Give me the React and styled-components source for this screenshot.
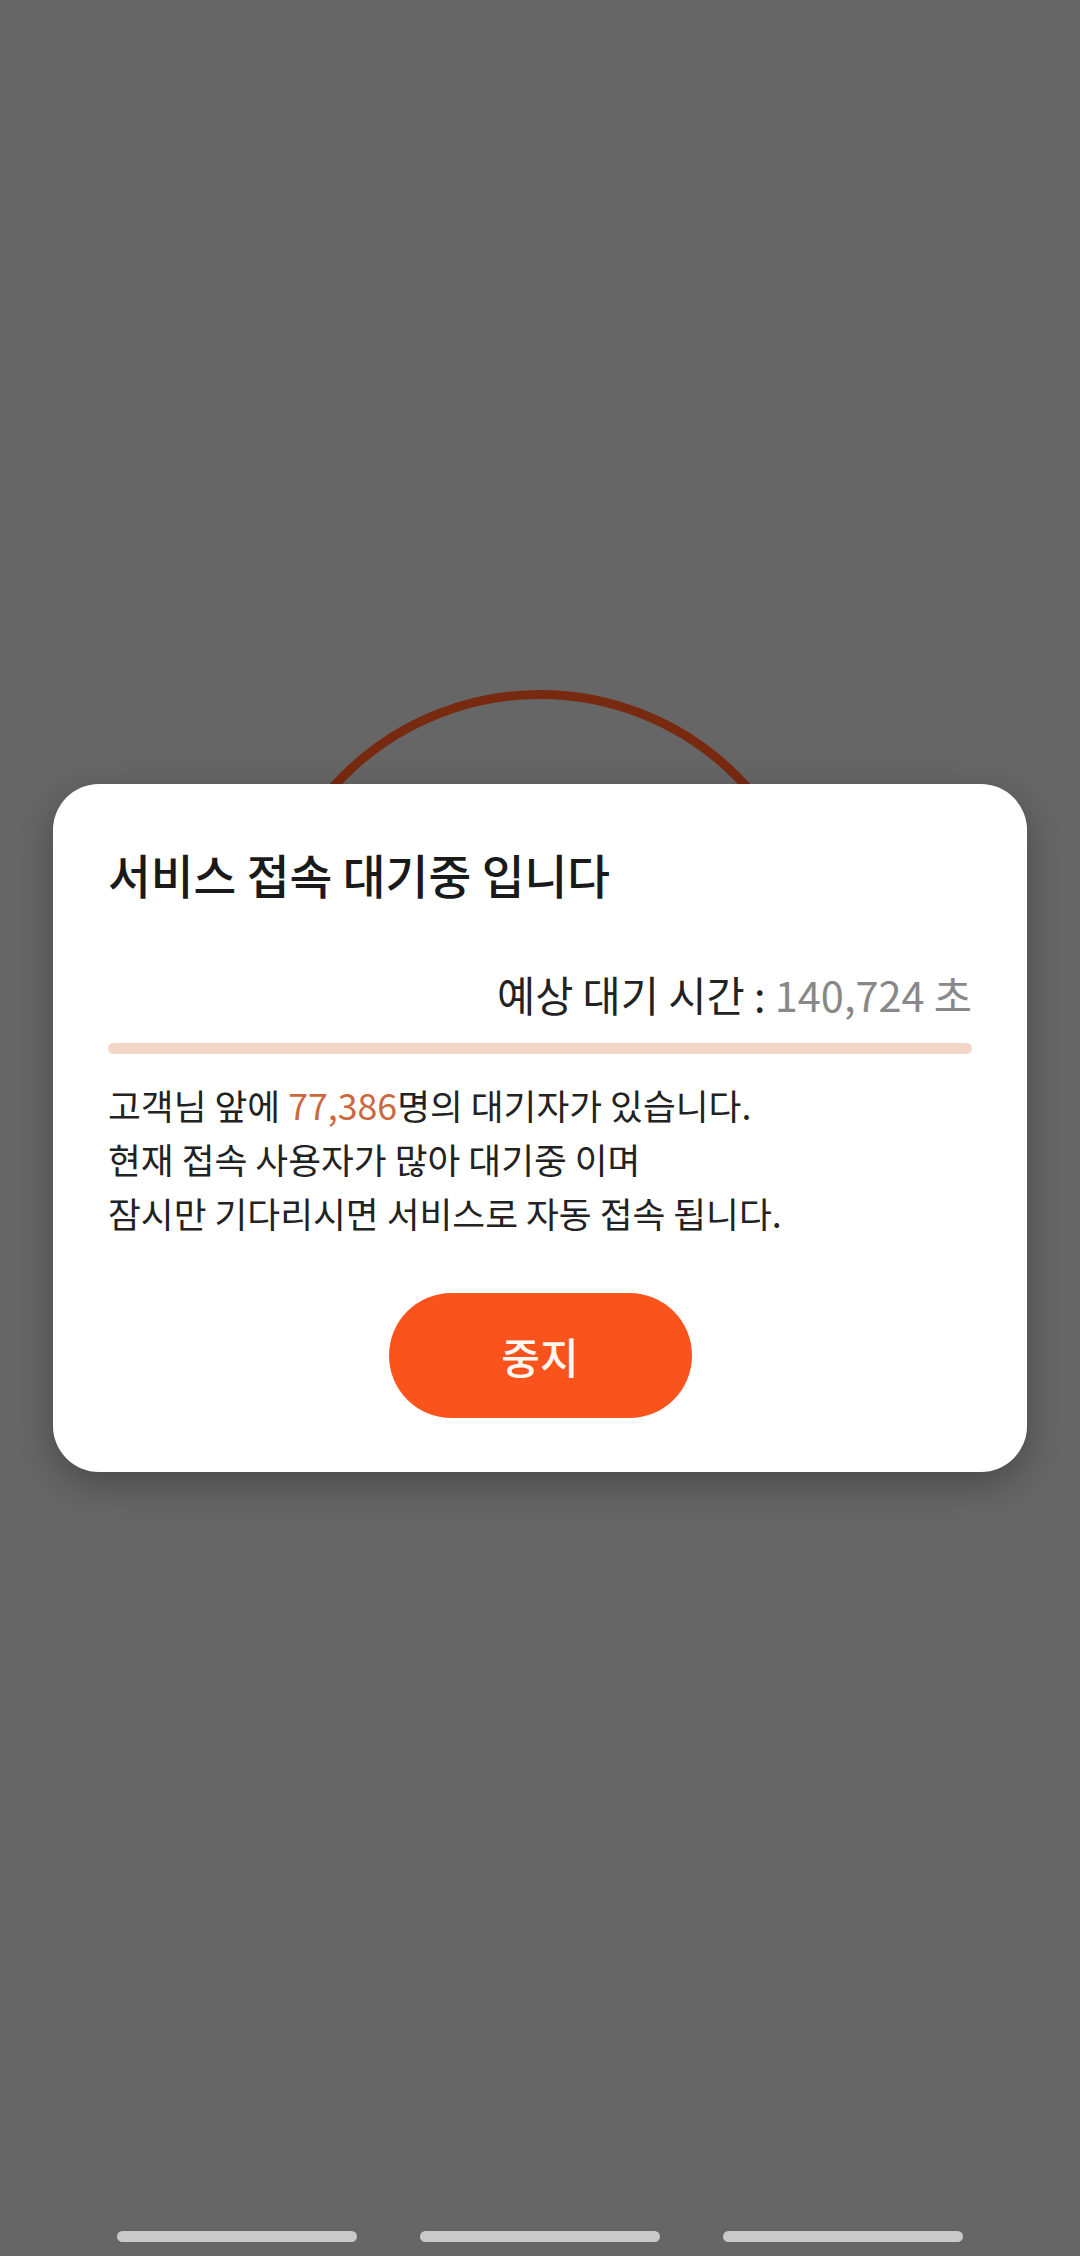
import React from "react";
import styled, { createGlobalStyle } from "styled-components";

const GlobalStyle = createGlobalStyle`
  html, body {
    margin: 0;
    padding: 0;
    background: #666666;
  }
  body {
    font-family: "Noto Sans CJK KR", "Noto Sans", sans-serif;
  }
  * { box-sizing: border-box; }
`;

const Screen = styled.div`
  position: relative;
  width: 1080px;
  height: 2256px;
  background: #666666;
  display: flex;
  flex-direction: column;
  align-items: center;
  overflow: hidden;
`;

const Spinner = styled.div`
  margin-top: 690px;
  width: 564px;
  height: 564px;
  border-radius: 50%;
  border: 9px solid #782a10;
`;

const NavBar = styled.nav`
  margin-top: auto;
  padding-bottom: 14px;
  display: flex;
  gap: 63px;
`;

const NavPill = styled.span`
  width: 240px;
  height: 11px;
  border-radius: 6px;
  background: #c9c9c9;
`;

const Overlay = styled.div`
  position: absolute;
  inset: 0;
  display: flex;
  align-items: center;
  justify-content: center;
`;

const Dialog = styled.section`
  width: 974px;
  background: #ffffff;
  border-radius: 46px;
  padding: 64px 55px 54px;
  display: flex;
  flex-direction: column;
  box-shadow: 0 12px 36px rgba(0, 0, 0, 0.28);
`;

const Title = styled.h2`
  margin: 0;
  font-size: 46.5px;
  line-height: 52px;
  font-weight: 500;
  color: #1a1a1a;
`;

const WaitRow = styled.div`
  margin-top: 70px;
  text-align: right;
  font-size: 41.5px;
  line-height: 48px;
  color: #222222;
`;

const Muted = styled.span`
  color: #888888;
`;

const Progress = styled.div`
  margin-top: 25px;
  height: 11px;
  border-radius: 6px;
  background: #f4d6c9;
  overflow: hidden;
`;

const ProgressFill = styled.div`
  height: 100%;
  background: #f4d6c9;
`;

const Message = styled.p`
  margin: 24px 0 0;
  font-size: 35.7px;
  line-height: 54px;
  color: #222222;
`;

const Highlight = styled.span`
  color: #cc6840;
`;

const StopButton = styled.button`
  margin: 53px auto 0;
  width: 303px;
  height: 125px;
  border: none;
  border-radius: 63px;
  background: #fa541c;
  color: #fff8f2;
  font-family: inherit;
  font-size: 42px;
  font-weight: 500;
  cursor: pointer;
`;

export default function App() {
  const progress = 0;
  return (
    <>
      <GlobalStyle />
      <Screen>
        <Spinner />
        <NavBar>
          <NavPill />
          <NavPill />
          <NavPill />
        </NavBar>
        <Overlay>
          <Dialog>
            <Title>서비스 접속 대기중 입니다</Title>
            <WaitRow>
              예상 대기 시간 : <Muted>140,724 초</Muted>
            </WaitRow>
            <Progress>
              <ProgressFill style={{ width: `${progress}%` }} />
            </Progress>
            <Message>
              고객님 앞에 <Highlight>77,386</Highlight>명의 대기자가 있습니다.
              <br />
              현재 접속 사용자가 많아 대기중 이며
              <br />
              잠시만 기다리시면 서비스로 자동 접속 됩니다.
            </Message>
            <StopButton>중지</StopButton>
          </Dialog>
        </Overlay>
      </Screen>
    </>
  );
}
